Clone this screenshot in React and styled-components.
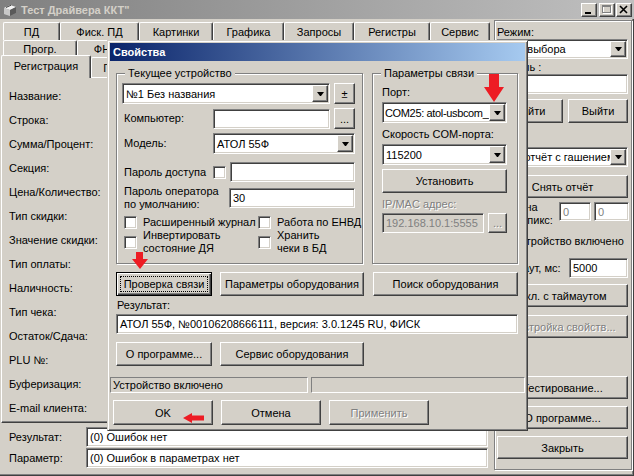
import React from "react";
import styled, { createGlobalStyle, css } from "styled-components";

const GlobalStyle = createGlobalStyle`
  html, body {
    margin: 0;
    padding: 0;
    background: #d4d0c8;
  }
  body {
    font-family: "Liberation Sans", Arial, sans-serif;
    font-size: 11px;
    color: #000;
  }
  * {
    box-sizing: border-box;
  }
`;

const raised = css`
  border: 1px solid;
  border-color: #fff #404040 #404040 #fff;
  box-shadow: inset -1px -1px 0 #808080, inset 1px 1px 0 #d4d0c8;
`;

const sunken = css`
  border: 1px solid;
  border-color: #808080 #fff #fff #808080;
  box-shadow: inset 1px 1px 0 #404040, inset -1px -1px 0 #d4d0c8;
`;

const Window = styled.div`
  position: relative;
  width: 634px;
  height: 476px;
  overflow: hidden;
  background: #d4d0c8;
  display: flex;
  flex-direction: column;
  box-shadow: inset -1px -1px 0 #404040, inset -2px -2px 0 #808080;
`;

const TitleBar = styled.div`
  flex: none;
  height: ${(p) => p.$h}px;
  display: flex;
  align-items: center;
  gap: 3px;
  padding: 0 2px 0 2px;
  font-weight: bold;
  white-space: nowrap;
  color: ${(p) => (p.$active ? "#fff" : "#d4d0c8")};
  background: ${(p) =>
    p.$active
      ? "linear-gradient(to right, #0a246a, #a6caf0)"
      : "linear-gradient(to right, #808080, #c0c0c0)"};
`;

const TitleText = styled.span`
  flex: 1;
  padding-left: ${(p) => p.$pl || 0}px;
`;

const CaptionButtons = styled.div`
  display: flex;
  flex: none;
`;

const CapButton = styled.div`
  flex: none;
  width: 16px;
  height: 14px;
  margin-left: ${(p) => p.$ml || 0}px;
  background: #d4d0c8;
  display: flex;
  align-items: center;
  justify-content: center;
  ${raised};
`;

const Client = styled.div`
  flex: 1;
  display: flex;
  padding-right: 2px;
`;

const LeftArea = styled.div`
  width: 492px;
  flex: none;
  display: flex;
  flex-direction: column;
  padding: 3px 0 0 1px;
`;

const TabRow = styled.div`
  display: flex;
  align-items: flex-end;
  height: ${(p) => p.$h}px;
  padding-left: ${(p) => p.$pl}px;
`;

const Tab = styled.div`
  flex: none;
  width: ${(p) => p.$w}px;
  height: ${(p) => (p.$active ? p.$h + 1 : p.$h)}px;
  display: flex;
  align-items: center;
  justify-content: center;
  white-space: nowrap;
  overflow: hidden;
  background: #d4d0c8;
  border-top: 1px solid #fff;
  border-left: 1px solid #fff;
  border-right: 1px solid #404040;
  border-radius: 2px 2px 0 0;
  box-shadow: inset -1px 0 0 #808080;
  ${(p) =>
    p.$active &&
    css`
      position: relative;
      z-index: 1;
      margin-bottom: -1px;
      padding-bottom: 2px;
    `}
`;

const TabPage = styled.div`
  height: 346px;
  width: 490px;
  padding: 6px 0 0 7px;
  border: 1px solid;
  border-color: #fff #404040 #404040 #fff;
  box-shadow: inset -1px -1px 0 #808080;
`;

const PageLabel = styled.div`
  height: 24px;
  line-height: 24px;
  white-space: nowrap;
`;

const ResultRows = styled.div`
  display: flex;
  flex-direction: column;
  gap: 1px;
  margin-top: 4px;
`;

const ResultRow = styled.div`
  display: flex;
  align-items: center;
  height: 20px;
`;

const ResultLabel = styled.div`
  width: 85px;
  padding-left: 8px;
  white-space: nowrap;
`;

const RightPanel = styled.div`
  width: 138px;
  height: 450px;
  margin: 1px 0 0 2px;
  padding: 0 3px 0 2px;
  display: flex;
  flex-direction: column;
  border: 1px solid #808080;
  box-shadow: inset 1px 1px 0 #fff, 1px 1px 0 #fff;
`;

const Label = styled.div`
  flex: none;
  width: ${(p) => (p.$w ? `${p.$w}px` : "auto")};
  margin-top: ${(p) => p.$mt || 0}px;
  padding-left: ${(p) => p.$pl || 0}px;
  line-height: ${(p) => p.$lh || 13}px;
  white-space: nowrap;
  ${(p) =>
    p.$disabled &&
    css`
      color: #808080;
      text-shadow: 1px 1px 0 #fff;
    `}
`;

const Row = styled.div`
  flex: none;
  display: flex;
  align-items: ${(p) => p.$align || "center"};
  gap: ${(p) => (p.$gap === undefined ? 4 : p.$gap)}px;
  height: ${(p) => p.$h}px;
  margin-top: ${(p) => p.$mt || 0}px;
  padding-left: ${(p) => p.$pl || 0}px;
`;

const Combo = styled.div`
  flex: none;
  width: ${(p) => (p.$w ? `${p.$w}px` : "100%")};
  height: ${(p) => p.$h}px;
  margin-top: ${(p) => p.$mt || 0}px;
  padding: 1px;
  display: flex;
  align-items: stretch;
  background: #fff;
  ${sunken};
`;

const ComboText = styled.div`
  flex: 1;
  min-width: 0;
  overflow: hidden;
  white-space: nowrap;
  padding-left: ${(p) => (p.$tight ? 1 : 2)}px;
  letter-spacing: ${(p) => (p.$tight ? "-0.35px" : "normal")};
  display: flex;
  align-items: center;
`;

const DropButton = styled.div`
  flex: none;
  width: 16px;
  background: #d4d0c8;
  display: flex;
  align-items: center;
  justify-content: center;
  ${raised};
`;

const Edit = styled.div`
  flex: none;
  width: ${(p) => (p.$w ? `${p.$w}px` : "100%")};
  height: ${(p) => p.$h}px;
  margin-top: ${(p) => p.$mt || 0}px;
  padding: 0 3px;
  display: flex;
  align-items: center;
  overflow: hidden;
  white-space: nowrap;
  background: ${(p) => (p.$disabled ? "#d4d0c8" : "#fff")};
  color: ${(p) => (p.$disabled || p.$muted ? "#808080" : "#000")};
  ${sunken};
`;

const Check = styled.div`
  flex: none;
  width: 13px;
  height: 13px;
  background: #fff;
  ${sunken};
`;

const CheckItem = styled.div`
  flex: none;
  width: ${(p) => (p.$w ? `${p.$w}px` : "auto")};
  display: flex;
  align-items: center;
  gap: ${(p) => p.$gap || 6}px;
  line-height: 13px;
  white-space: nowrap;
`;

const Btn = styled.div`
  position: relative;
  flex: none;
  width: ${(p) => (p.$w ? `${p.$w}px` : "100%")};
  height: ${(p) => p.$h}px;
  margin-top: ${(p) => p.$mt || 0}px;
  margin-left: ${(p) => p.$ml || 0}px;
  display: flex;
  align-items: center;
  justify-content: center;
  white-space: nowrap;
  overflow: hidden;
  background: #d4d0c8;
  ${raised};
  ${(p) =>
    p.$disabled &&
    css`
      color: #808080;
      text-shadow: 1px 1px 0 #fff;
    `}
  ${(p) =>
    p.$default &&
    css`
      border: 1px solid #000;
      box-shadow: inset 1px 1px 0 #fff, inset -1px -1px 0 #404040,
        inset -2px -2px 0 #808080;
      &::after {
        content: "";
        position: absolute;
        inset: 3px;
        border: 1px dotted #000;
      }
    `}
`;

const Dialog = styled.div`
  position: absolute;
  left: 107px;
  top: 40px;
  width: 421px;
  height: 391px;
  z-index: 2;
  padding: 2px;
  display: flex;
  flex-direction: column;
  background: #d4d0c8;
  border: 1px solid;
  border-color: #d4d0c8 #404040 #404040 #d4d0c8;
  box-shadow: inset 1px 1px 0 #fff, inset -1px -1px 0 #808080;
`;

const DialogBody = styled.div`
  display: flex;
  flex-direction: column;
  padding: 6px 7px 0 6px;
`;

const Groups = styled.div`
  display: flex;
  gap: 9px;
  height: 197px;
`;

const Group = styled.fieldset`
  margin: 0;
  min-width: 0;
  width: ${(p) => p.$w}px;
  padding: 0 ${(p) => p.$pr}px 0 ${(p) => p.$pl}px;
  border: 1px solid #808080;
  box-shadow: inset 1px 1px 0 #fff, 1px 1px 0 #fff;
  display: flex;
  flex-direction: column;
`;

const Legend = styled.legend`
  margin-left: ${(p) => p.$ml}px;
  padding: 0 3px;
  line-height: 13px;
  background: #d4d0c8;
  white-space: nowrap;
`;

const StatusBar = styled.div`
  display: flex;
  gap: 3px;
  height: 16px;
  margin-top: 11px;
`;

const StatusPanel = styled.div`
  width: ${(p) => (p.$w ? `${p.$w}px` : "auto")};
  flex: ${(p) => (p.$w ? "none" : "1")};
  padding-left: 2px;
  display: flex;
  align-items: center;
  white-space: nowrap;
  border: 1px solid;
  border-color: #808080 #fff #fff #808080;
`;

const Marker = styled.svg`
  position: absolute;
  left: ${(p) => p.$x}px;
  top: ${(p) => p.$y}px;
  z-index: 5;
`;

function Triangle() {
  return (
    <svg width="7" height="4" viewBox="0 0 7 4">
      <polygon points="0,0 7,0 4,4 3,4" fill="#000" />
    </svg>
  );
}

function ComboBox({ value, w, h = 21, mt, tight }) {
  return (
    <Combo $w={w} $h={h} $mt={mt}>
      <ComboText $tight={tight}>{value}</ComboText>
      <DropButton>
        <Triangle />
      </DropButton>
    </Combo>
  );
}

function AppIcon() {
  return (
    <svg width="16" height="16" viewBox="0 0 16 16">
      <path d="M2 6 L8 3 L14 5 L14 11 L8 14 L2 12 Z" fill="#9a9a9a" />
      <path d="M2 6 L8 3 L14 5 L8 8 Z" fill="#f2f2f2" />
      <path d="M8 8 L14 5 L14 11 L8 14 Z" fill="#5a5a5a" />
      <path d="M2 6 L8 8 L8 14 L2 12 Z" fill="#c8c8c8" />
      <path d="M4 5.5 L9 3.2" stroke="#404040" strokeWidth="1" />
    </svg>
  );
}

const tabRow1 = [
  ["ПД", 57],
  ["Фиск. ПД", 79],
  ["Картинки", 74],
  ["Графика", 71],
  ["Запросы", 70],
  ["Регистры", 76],
  ["Сервис", 60],
];

const tabRow2 = [
  ["Прогр.", 74],
  ["ФН", 50],
];

const tabRow3 = [
  ["Регистрация", 90, true],
  ["Гаш.", 48],
];

const pageLabels = [
  "Название:",
  "Строка:",
  "Сумма/Процент:",
  "Секция:",
  "Цена/Количество:",
  "Тип скидки:",
  "Значение скидки:",
  "Тип оплаты:",
  "Наличность:",
  "Тип чека:",
  "Остаток/Сдача:",
  "PLU №:",
  "Буферизация:",
  "E-mail клиента:",
];

function PropertiesDialog() {
  return (
    <Dialog>
      <TitleBar $h={18} $active>
        <TitleText $pl={1}>Свойства</TitleText>
      </TitleBar>
      <DialogBody>
        <Groups>
          <Group $w={247} $pl={5} $pr={7}>
            <Legend $ml={3}>Текущее устройство</Legend>
            <Row $h={21} $mt={3}>
              <ComboBox value="№1 Без названия" w={208} />
              <Btn $w={21} $h={21}>±</Btn>
            </Row>
            <Row $h={21} $mt={4}>
              <Label $w={87} $pl={2}>Компьютер:</Label>
              <Edit $w={117} $h={20} />
              <Btn $w={21} $h={21}>...</Btn>
            </Row>
            <Row $h={21} $mt={4}>
              <Label $w={87} $pl={2}>Модель:</Label>
              <ComboBox value="АТОЛ 55Ф" w={142} />
            </Row>
            <Row $h={20} $mt={8}>
              <Label $w={87} $pl={2}>Пароль доступа</Label>
              <Check />
              <Edit $w={125} $h={20} />
            </Row>
            <Row $h={26} $mt={3}>
              <Label $w={103} $pl={2}>
                Пароль оператора
                <br />
                по умолчанию:
              </Label>
              <Edit $w={126} $h={20}>30</Edit>
            </Row>
            <Row $h={13} $mt={5} $pl={2}>
              <CheckItem $w={130}>
                <Check />
                Расширенный журнал
              </CheckItem>
              <CheckItem>
                <Check />
                Работа по ЕНВД
              </CheckItem>
            </Row>
            <Row $h={26} $pl={2}>
              <CheckItem $w={130}>
                <Check />
                <span>
                  Инвертировать
                  <br />
                  состояние ДЯ
                </span>
              </CheckItem>
              <CheckItem>
                <Check />
                <span>
                  Хранить
                  <br />
                  чеки в БД
                </span>
              </CheckItem>
            </Row>
          </Group>
          <Group $w={146} $pl={9} $pr={10}>
            <Legend $ml={-1}>Параметры связи</Legend>
            <Label $mt={6}>Порт:</Label>
            <ComboBox value="COM25: atol-usbcom_" mt={3} tight />
            <Label $mt={5}>Скорость COM-порта:</Label>
            <ComboBox value="115200" mt={3} />
            <Btn $h={24} $mt={4}>Установить</Btn>
            <Label $mt={5} $disabled>
              IP/MAC адрес:
            </Label>
            <Row $h={20} $mt={2}>
              <Edit $w={102} $h={20} $disabled>
                192.168.10.1:5555
              </Edit>
              <Btn $w={19} $h={20} $disabled>
                ...
              </Btn>
            </Row>
          </Group>
        </Groups>
        <Row $h={24} $mt={8} $gap={8}>
          <Btn $w={96} $h={24} $default>
            Проверка связи
          </Btn>
          <Btn $w={144} $h={24}>Параметры оборудования</Btn>
          <Btn $w={145} $h={24} $ml={1}>
            Поиск оборудования
          </Btn>
        </Row>
        <Label $mt={2} $pl={1} $lh={14}>
          Результат:
        </Label>
        <Edit $h={20} $mt={2}>
          АТОЛ 55Ф, №00106208666111, версия: 3.0.1245 RU, ФИСК
        </Edit>
        <Row $h={24} $mt={8} $gap={8}>
          <Btn $w={96} $h={24}>О программе...</Btn>
          <Btn $w={144} $h={24}>Сервис оборудования</Btn>
        </Row>
      </DialogBody>
      <StatusBar>
        <StatusPanel $w={198}>Устройство включено</StatusPanel>
        <StatusPanel />
      </StatusBar>
      <Row $h={25} $mt={7} $gap={8} $pl={3}>
        <Btn $w={100} $h={25}>OK</Btn>
        <Btn $w={100} $h={25}>Отмена</Btn>
        <Btn $w={100} $h={25} $disabled>
          Применить
        </Btn>
      </Row>
    </Dialog>
  );
}

function ControlPanel() {
  return (
    <RightPanel>
      <Label $mt={5}>Режим:</Label>
      <ComboBox value="Реж. выбора" h={20} />
      <Label $mt={2}>Пароль :</Label>
      <Edit $h={20} />
      <Row $h={24} $mt={5} $gap={5}>
        <Btn $w={66} $h={24}>Войти</Btn>
        <Btn $w={60} $h={24}>Выйти</Btn>
      </Row>
      <ComboBox value="Сут. отчёт с гашением" h={20} mt={24} />
      <Btn $h={23} $mt={8}>Снять отчёт</Btn>
      <Row $h={26} $mt={3} $align="flex-start" $gap={3}>
        <Label $w={59}>
          Ширина
          <br />
          поля, пикс:
        </Label>
        <Edit $w={32} $h={19} $muted $mt={1}>
          0
        </Edit>
        <Edit $w={35} $h={19} $muted $mt={1}>
          0
        </Edit>
      </Row>
      <Row $h={13} $mt={8}>
        <CheckItem $gap={4}>
          <Check />
          Устройство включено
        </CheckItem>
      </Row>
      <Row $h={20} $mt={10} $gap={0}>
        <Label $w={72}>Таймаут, мс:</Label>
        <Edit $w={59} $h={20}>5000</Edit>
      </Row>
      <Btn $h={23} $mt={6}>Вкл. с таймаутом</Btn>
      <Btn $h={23} $mt={8} $disabled>
        Настройка свойств...
      </Btn>
      <Btn $h={23} $mt={38}>Тестирование...</Btn>
      <Btn $h={23} $mt={7}>О программе...</Btn>
      <Btn $h={23} $mt={7}>Закрыть</Btn>
    </RightPanel>
  );
}

export default function App() {
  return (
    <>
      <GlobalStyle />
      <Window>
        <TitleBar $h={19}>
          <AppIcon />
          <TitleText>Тест Драйвера ККТ"</TitleText>
          <CaptionButtons>
            <CapButton>
              <svg width="14" height="12" viewBox="0 0 14 12">
                <rect x="3" y="8" width="6" height="2" fill="#000" />
              </svg>
            </CapButton>
            <CapButton $ml={2}>
              <svg width="14" height="12" viewBox="0 0 14 12">
                <rect x="3.5" y="2.5" width="8" height="7" fill="none" stroke="#fff" />
                <rect x="2.5" y="1.5" width="8" height="7" fill="none" stroke="#808080" />
                <rect x="2" y="2" width="9" height="1" fill="#808080" />
              </svg>
            </CapButton>
            <CapButton $ml={1}>
              <svg width="14" height="12" viewBox="0 0 14 12">
                <path d="M3 2 L10 9 M10 2 L3 9" stroke="#000" strokeWidth="1.6" />
              </svg>
            </CapButton>
          </CaptionButtons>
        </TitleBar>
        <Client>
          <LeftArea>
            <TabRow $h={18} $pl={2}>
              {tabRow1.map(([t, w]) => (
                <Tab key={t} $w={w} $h={18}>
                  {t}
                </Tab>
              ))}
            </TabRow>
            <TabRow $h={17} $pl={2}>
              {tabRow2.map(([t, w]) => (
                <Tab key={t} $w={w} $h={17}>
                  {t}
                </Tab>
              ))}
            </TabRow>
            <TabRow $h={20} $pl={0}>
              {tabRow3.map(([t, w, active]) => (
                <Tab key={t} $w={w} $h={active ? 22 : 20} $active={active}>
                  {t}
                </Tab>
              ))}
            </TabRow>
            <TabPage>
              {pageLabels.map((l) => (
                <PageLabel key={l}>{l}</PageLabel>
              ))}
            </TabPage>
            <ResultRows>
              <ResultRow>
                <ResultLabel>Результат:</ResultLabel>
                <Edit $w={402} $h={20}>(0) Ошибок нет</Edit>
              </ResultRow>
              <ResultRow>
                <ResultLabel>Параметр:</ResultLabel>
                <Edit $w={402} $h={20}>(0) Ошибок в параметрах нет</Edit>
              </ResultRow>
            </ResultRows>
          </LeftArea>
          <ControlPanel />
        </Client>
        <PropertiesDialog />
        <Marker $x={484} $y={74} width="20" height="28" viewBox="0 0 20 28">
          <polygon points="5,0 15,0 15,13 20,13 10,28 0,13 5,13" fill="#ed1c24" />
        </Marker>
        <Marker $x={132} $y={252} width="16" height="17" viewBox="0 0 16 17">
          <polygon points="4,0 11,0 11,7 16,7 8,17 0,7 4,7" fill="#ed1c24" />
        </Marker>
        <Marker $x={183} $y={413} width="21" height="10" viewBox="0 0 21 10">
          <polygon points="0,5 9,0 9,2.5 21,2.5 21,7.5 9,7.5 9,10" fill="#ed1c24" />
        </Marker>
      </Window>
    </>
  );
}
